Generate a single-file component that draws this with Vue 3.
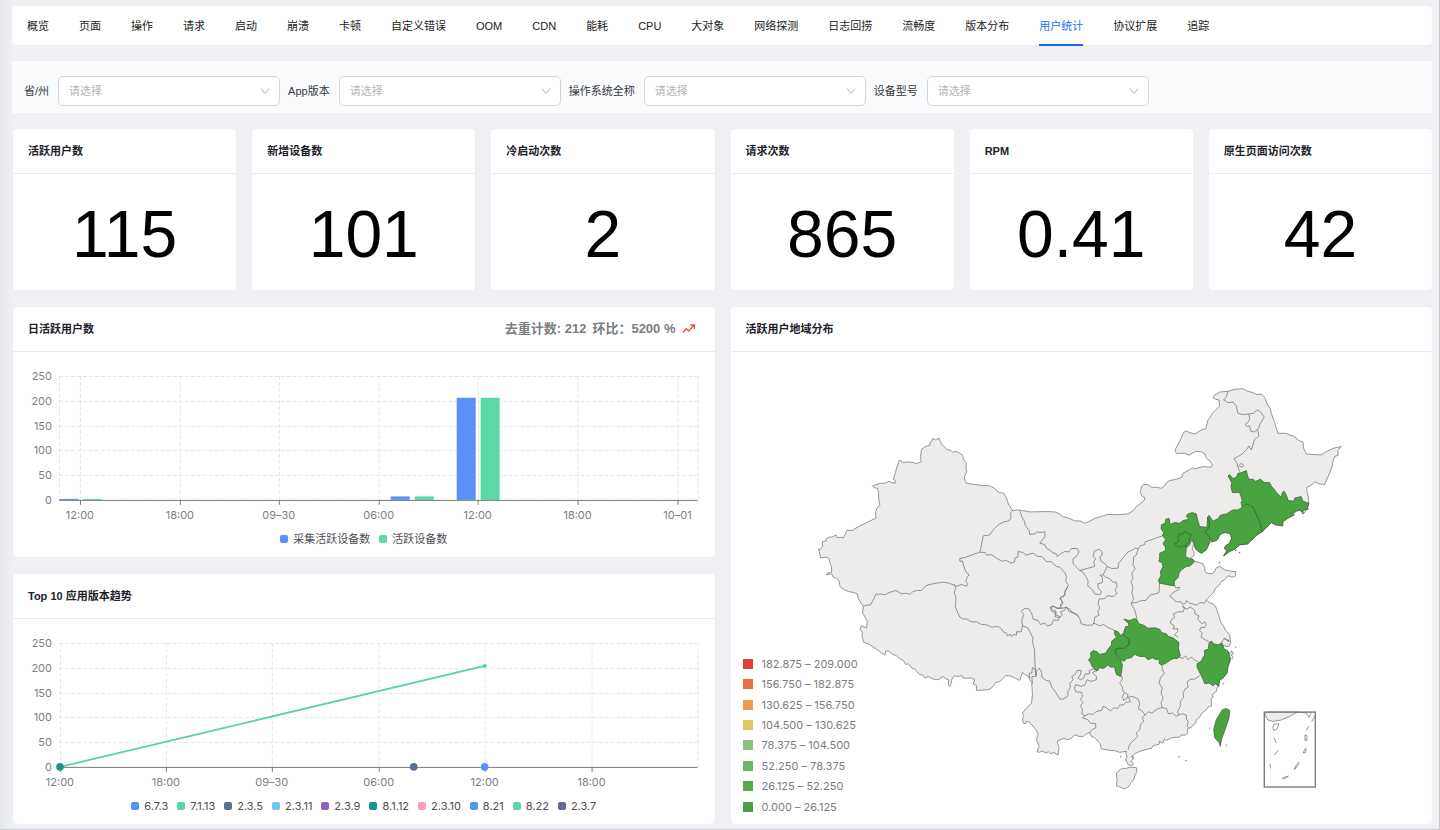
<script setup>
import { ref } from 'vue'

const tabs = ['概览', '页面', '操作', '请求', '启动', '崩溃', '卡顿', '自定义错误', 'OOM', 'CDN', '能耗', 'CPU', '大对象', '网络探测', '日志回捞', '流畅度', '版本分布', '用户统计', '协议扩展', '追踪']
const activeTab = ref('用户统计')

const filters = [
  { id: 'province', label: '省/州' },
  { id: 'app-version', label: 'App版本' },
  { id: 'os-name', label: '操作系统全称' },
  { id: 'device', label: '设备型号' },
]

const stats = [
  { title: '活跃用户数', value: '115' },
  { title: '新增设备数', value: '101' },
  { title: '冷启动次数', value: '2' },
  { title: '请求次数', value: '865' },
  { title: 'RPM', value: '0.41' },
  { title: '原生页面访问次数', value: '42' },
]

const plot = { left: 46, right: 685, top: 24, bottom: 148 }
const yTicks = [250, 200, 150, 100, 50, 0]
const yOf = (v) => plot.bottom - (v / 250) * (plot.bottom - plot.top)
const lineY = (v) => Math.round(yOf(v)) + 0.5

const barTicks = ['12:00', '18:00', '09–30', '06:00', '12:00', '18:00', '10–01'].map((label, i) => ({ label, x: Math.round(67 + i * 99.6) }))
const bars = [
  { x: 47, v: 2, color: '#5b8ff9' },
  { x: 70, v: 2, color: '#5ad8a6' },
  { x: 378, v: 7, color: '#5b8ff9' },
  { x: 402, v: 7, color: '#5ad8a6' },
  { x: 444, v: 206, color: '#5b8ff9' },
  { x: 468, v: 206, color: '#5ad8a6' },
]
const barLegend = [
  { name: '采集活跃设备数', color: '#5b8ff9' },
  { name: '活跃设备数', color: '#5ad8a6' },
]

const lineTicks = ['12:00', '18:00', '09–30', '06:00', '12:00', '18:00'].map((label, i) => ({ label, x: Math.round(46.5 + i * 106.4) }))
const versions = [
  { name: '6.7.3', color: '#5b8ff9' },
  { name: '7.1.13', color: '#5ad8a6' },
  { name: '2.3.5', color: '#5d7092' },
  { name: '2.3.11', color: '#6dc8ec' },
  { name: '2.3.9', color: '#9261bb' },
  { name: '8.1.12', color: '#1e9493' },
  { name: '2.3.10', color: '#ff99c3' },
  { name: '8.21', color: '#5b8ff9' },
  { name: '8.22', color: '#5ad8a6' },
  { name: '2.3.7', color: '#666a93' },
]

const ranges = [
  { text: '182.875 – 209.000', color: '#e7403b' },
  { text: '156.750 – 182.875', color: '#ee6d3f' },
  { text: '130.625 – 156.750', color: '#f1994f' },
  { text: '104.500 – 130.625', color: '#dfc95e' },
  { text: '78.375 – 104.500', color: '#8cc17c' },
  { text: '52.250 – 78.375', color: '#66b962' },
  { text: '26.125 – 52.250', color: '#55ab45' },
  { text: '0.000 – 26.125', color: '#4b9e47' },
]

/* The map is drawn in three sheets; each sheet has its own origin. */
const W = [0, 120]
const N = [660, 0]
const S = [660, 600]
const shift = ([dx, dy], s) => s.trim().split(/\s+/).map((p) => {
  const [x, y] = p.split(',').map(Number)
  return `${x + dx},${y + dy}`
}).join(' ')

const country = [
  shift(W, '55,388 62,388 68,380 67,366 78,363 80,356 88,352 98,351 108,345 112,354 122,352 130,354 136,344 140,332 158,331 168,325 180,318 204,306 228,295 227,275 233,262 240,257 236,235 236,218 232,205 222,203 218,198 240,190 255,190 268,184 275,188 286,190 285,180 280,178 286,160 290,145 298,121 306,124 310,129 320,126 340,128 350,131 364,126 362,110 365,88 376,80 390,76 390,68 396,64 399,55 406,60 418,55 424,72 430,77 440,88 452,91 458,97 466,94 475,97 488,106 492,120 500,130 498,142 501,155 494,170 494,180 500,190 540,196 570,198 585,206 598,218 612,220 620,234 625,250 638,272 658,270 690,276 740,275 765,276 780,282 790,291 805,294 825,303'),
  shift(N, '180,423 195,430 205,426 225,416 262,404 300,404 325,402 340,392 350,380 375,360 374,352 366,348 362,335 366,318 372,314 385,314 395,322 410,322 425,325 435,318 440,308 450,302 470,298 486,292 490,280 512,268 518,264 525,267 550,260 575,262 578,255 572,244 560,235 556,222 545,216 530,214 518,220 508,226 495,220 478,220 472,222 466,214 468,206 485,175 488,165 497,152 510,158 525,162 545,150 558,147 565,120 572,112 578,100 590,88 600,78 598,60 588,58 580,54 584,46 600,36 625,34 645,28 668,26 685,34 700,38 712,44 725,42 735,52 744,75 752,85 755,100 764,124 768,138 775,160 800,160 812,166 822,168 838,182 850,186 852,205 860,222 880,224 905,225 920,215 935,208 945,204 965,200 955,212 956,226 945,230 940,246 938,260 930,280 915,314 900,312 885,306 875,316 862,322 862,335 866,350 868,370 860,392 851,402 842,390 832,394 820,400 810,412 790,425 788,438 768,435 755,428 742,442 728,455 708,468 700,478 690,485 685,492 660,495 645,508 630,515 612,528 622,512 614,506 618,498 630,490 636,475 632,462 618,458 608,460 600,466 594,478 590,482 575,486 568,492 560,510 545,520 538,516 528,508 520,482 515,482 500,500 502,530 525,545 540,548 550,552 555,562 556,575 562,580 578,582 585,574 590,564 600,560 615,570 640,575 648,575 648,588 640,592 625,588 615,600 605,605 600,615 588,625 582,638 565,655'),
  shift(S, '560,60 568,68 580,72 588,80 592,92 597,105 602,124 612,140 620,155 630,165 632,180 632,192 628,200 618,200 608,196 612,208 625,215 630,222 632,240 625,260 622,280 610,295 600,300 597,318 592,325 590,335 578,345 580,352 574,358 576,378 565,382 560,390 545,402 540,412 530,420 528,430 515,442 503,448 505,458 498,466 485,466 480,472 455,474 440,482 434,478 430,490 420,484 418,494 400,498 395,506 385,508 370,512 360,515 345,522 336,530 340,538 334,545 342,552 338,557 325,555 318,540 322,530 318,522 320,515 300,518 285,513 270,512 245,508 240,490 225,474 215,470 210,458 200,462 190,470 178,470 165,465 155,475 145,480 132,476 115,482 112,490 118,500 115,526 106,522 104,518 92,522 86,516 80,520 66,514 60,518 52,516 58,500 50,480 55,462 48,450 40,440 30,428 20,424 18,432 10,430 8,418 12,410 8,400 20,385 28,378 35,370 38,345 36,310'),
  shift(W, '698,790 690,780 685,768 676,765 668,758 664,770 660,782 648,776 630,768 618,768 600,785 588,788 575,805 565,810 530,812 530,798 520,792 525,780 515,775 490,775 488,768 470,770 464,768 456,778 454,790 450,800 446,796 446,780 436,776 430,770 415,780 400,778 385,770 375,775 370,766 360,765 350,755 346,748 336,745 325,732 318,734 310,722 298,716 290,708 278,704 268,695 258,693 255,706 245,700 235,692 205,672 192,668 186,648 188,638 181,630 184,618 200,624 202,605 196,592 188,580 190,560 180,545 175,535 172,522 160,518 145,515 130,508 120,500 118,485 110,475 100,472 95,462 80,465 82,460 95,457 95,440 90,430 88,418 80,412 62,414 58,395'),
].join(' ')

const borders = [
  [W, '638,272 632,280 634,292 628,303 612,306 600,312 592,318 580,330 570,345 550,348 545,375 540,397 520,404 498,412 480,416 480,424 488,424 492,440 498,456 508,465 502,472 498,485 504,492 500,499 484,494 468,500 462,492'],
  [W, '190,560 200,556 212,555 220,540 228,523 245,523 255,525 268,518 282,514 288,512 298,518 305,522 320,520 330,524 338,516 350,512 365,512 375,500 385,495 410,490 430,487 448,490 462,496 468,502 463,520 468,530 468,545 466,560 472,574 480,592 490,598 500,597 514,606 530,606 545,614 560,615 575,622 595,620 606,628 610,636 620,640 622,648 632,644 635,651 642,644 650,646 650,636 664,636 668,618'],
  [W, '668,618 666,600 672,584 664,574 676,565 688,568 696,582 700,598 715,602 722,614 735,610 742,618 755,615 762,600 775,602 780,590 765,584 768,574 752,566 758,558 775,565 790,565 800,562 808,575 820,578 836,590'],
  [W, '668,618 684,624 690,635 700,656 698,665 704,690 706,740 710,768 704,746 698,744 696,760 688,760 690,776'],
  [W, '540,397 556,398 560,406 574,404 590,415 606,424 620,422 634,430 644,426 645,415 654,412 655,395 670,398 678,406 700,400 714,410 726,410 740,425 755,426 770,440 780,442 795,458 800,470 798,485 806,496 795,515 796,526 782,536 790,550 782,560'],
  [N, '0,392 8,415 14,424 16,436 28,452 30,464 45,462 52,456 64,458 75,455 76,470 68,480 60,490 75,494 80,505 92,512 100,520 108,520 112,530 122,522 135,515 148,516 155,506 172,506 178,516 170,530 160,536 160,552 170,562 180,572 205,565 225,560 222,545 228,536 220,530 224,514 238,508 247,516 247,526 240,532 245,545 256,552 262,560 276,566 295,565 297,550 310,534 325,516 340,510 346,504 355,508 362,498 375,494 376,486 395,480 410,474 428,468'],
  [N, '180,572 188,576 200,592 205,604 204,618 218,630 225,642 240,645 246,636 236,626 234,612 248,608 248,592 240,586 250,585 262,560'],
  [N, '250,585 258,592 270,596 278,606 290,608 292,620 286,632 292,640 282,650 262,648 255,656 238,658 235,672 240,684 234,695 238,706 225,712 222,732'],
  [N, '355,508 350,525 342,532 340,555 346,566 336,582 340,595 334,605 340,625 336,640 342,656 334,672 345,690 352,718'],
  [S, '335,70 350,68 365,62 378,62 392,45 408,42 418,38 420,5'],
  [S, '145,20 136,35 135,45 120,55 128,66 122,75 125,85 110,86 102,80 92,82 96,95 110,98 105,110 118,114 128,106 122,96 134,92 140,82 152,90 156,98 172,104 180,116 184,132 200,136 218,136 222,130'],
  [S, '222,130 240,138 252,134 262,142 272,146 285,152'],
  [S, '38,310 36,290 48,290 50,275 58,265 66,278 66,292 80,302 90,304 96,322 108,338 120,358 130,358 145,348 144,335 152,322 150,310 160,300 156,290 168,282 172,272 184,272 182,285 175,295 182,300 192,295 196,283 210,282 208,272 222,268 238,270'],
  [S, '232,272 218,278 230,290 230,300 214,305 202,300 196,315 184,320 168,314 164,325 168,336 186,338 188,350 182,360 190,368 182,378 188,390 186,402 196,408 188,414 204,420 212,430 228,432 228,445 216,450 210,458'],
  [S, '196,408 208,402 220,404 230,395 246,392 250,380 260,384 272,394 282,384 294,386 300,376 312,375 318,368 332,366 326,352 338,350 355,358 360,372 356,388 366,392 376,406 386,396 396,400 404,394 416,386 428,384 440,386 446,402 458,400 470,410 476,406 488,402 500,406 500,418 506,426 502,440 508,446'],
  [S, '304,285 308,298 300,310 308,322 310,335 325,345 322,356 312,362 308,350 314,340'],
  [S, '427,255 428,270 434,280 422,295 418,310 428,325 424,340 430,355 424,370 428,384'],
  [S, '476,406 474,395 482,380 482,366 492,352 490,340 496,328 506,322 502,306 514,298 525,298 540,288'],
  [S, '376,406 368,412 372,425 362,435 360,450 350,460 354,470 344,480 335,488 328,498 326,510'],
  [S, '478,232 490,236 498,228 505,240 514,232 524,240 536,246'],
  [S, '475,172 464,165 474,155 474,146 460,148 464,138 452,130 454,120 464,114 462,102 474,96 490,96 494,86 488,78'],
  [S, '465,15 468,24 480,22 476,30 460,38 450,50 460,56 468,66 484,66 490,74 498,70 500,62 510,70 532,76 540,68 555,70 560,60'],
  [S, '488,78 500,88 512,82 524,90 526,102 538,108 534,118 546,132 556,126 560,134 554,144 544,142 540,152 548,160 544,172 560,182 575,190'],
  [S, '608,196 606,186 615,176 628,184'],
  [N, '625,34 620,50 612,60 625,68 640,66 650,78 655,100 670,104 688,102 702,100 712,90 722,95 734,112 722,130 718,142 714,150 718,168 704,180 700,195 695,210 688,198 680,210 668,222 655,230 643,236 652,250 655,262 660,275'],
  [N, '688,102 690,118 684,128 676,134 684,140 690,138 694,154 704,156 712,150'],
  [N, '656,260 664,250 672,256 668,262 660,258'],
].map(([o, s]) => shift(o, s))

const activeRegions = [
  [N, '625,288 630,284 640,296 650,292 655,280 666,278 680,272 684,288 688,298 700,298 708,304 722,298 735,308 750,308 756,320 764,328 772,340 785,352 788,338 794,334 800,345 806,362 822,364 826,354 845,350 850,364 868,370 864,384 866,388 850,392 851,402 842,390 832,392 820,400 824,406 806,414 790,425 790,438 768,435 755,428 742,442 728,455 722,432 714,412 706,395 704,385 690,375 668,382 664,368 668,362 660,338 638,338 634,320 636,308'],
  [N, '668,382 678,372 690,378 700,382 706,395 714,412 722,432 728,455 708,468 700,478 690,485 685,492 660,495 645,508 630,515 612,528 622,512 614,506 618,498 630,490 636,475 632,462 618,458 608,460 600,466 594,478 590,482 575,486 572,476 556,455 566,446 570,432 564,412 568,406 580,424 596,416 602,406 620,402 640,390 655,390'],
  [N, '428,468 432,458 424,446 425,435 436,430 438,418 448,416 452,434 465,428 480,430 490,422 508,418 500,410 504,402 518,398 530,402 534,420 540,440 562,442 564,412 570,432 566,446 556,455 572,476 568,492 560,510 545,520 538,516 528,508 520,482 510,480 510,495 500,505 498,530 508,535 520,538 525,545 512,558 500,560 485,570 478,580 476,592 464,604 464,618 450,616 440,614 420,610 416,602 424,586 422,575 430,560 426,548 418,545 420,532 420,520 438,512 436,500 430,492 438,478'],
  [S, '312,118 330,122 345,116 352,120 358,132 372,136 385,145 405,144 420,148 425,158 440,162 446,170 460,174 468,180 478,188 476,205 482,228 474,236 462,236 450,242 440,250 425,256 418,250 420,238 410,240 398,234 385,240 375,230 360,230 345,224 335,234 322,236 312,245 304,240 290,225 286,210 300,204 312,206 328,194 328,180 315,168 312,156 318,140 328,140 326,130'],
  [S, '285,152 295,156 304,168 310,160 315,168 328,180 328,194 312,206 300,204 286,210 290,228 302,240 308,255 306,275 302,290 290,284 284,262 272,262 264,256 252,266 238,264 232,274 218,262 212,248 206,240 214,232 212,220 220,212 232,216 240,224 258,220 265,208 275,196 276,184 290,172 284,162'],
  [S, '568,190 576,184 582,192 596,195 605,190 610,196 612,206 625,214 628,222 632,240 625,260 622,280 610,295 600,300 597,320 588,312 580,318 568,310 555,312 550,298 542,282 532,262 532,252 545,244 548,236 555,226 554,212 566,208'],
  [S, '608,390 620,386 630,392 628,415 618,445 606,478 602,500 598,488 585,474 582,448 590,420'],
].map(([o, s]) => shift(o, s))
const beijing = shift(N, '465,492 478,484 474,476 478,464 490,462 494,454 504,460 515,466 508,478 510,488 500,492 500,500 488,498 476,502')
const tianjin = shift(N, '515,482 510,495 500,505 498,530 510,536 522,528 524,518 518,508 522,492')
const hainan = shift(S, '290,580 300,572 306,566 320,566 330,562 350,564 352,576 345,588 342,600 332,612 328,620 315,628 300,622 290,618 292,600')
const islets = [[570, 445], [620, 496], [478, 531], [499, 543], [610, 312], [636, 214], [648, 202], [303, 531], [624, -88], [648, -88], [660, -82], [600, -52]]
</script>

<template>
  <div class="page">
    <nav class="tabs">
      <a v-for="t in tabs" :key="t" href="#" :class="{ active: t === activeTab }" @click.prevent="activeTab = t">{{ t }}</a>
    </nav>

    <form class="filters" @submit.prevent>
      <div v-for="f in filters" :key="f.id" class="field">
        <label :for="f.id">{{ f.label }}</label>
        <div class="select">
          <select :id="f.id"><option>请选择</option></select>
          <svg viewBox="0 0 10 10" aria-hidden="true"><path d="M1 2.5 5 7.5 9 2.5" /></svg>
        </div>
      </div>
    </form>

    <section class="stats">
      <article v-for="s in stats" :key="s.title" class="card">
        <header><h2>{{ s.title }}</h2></header>
        <p class="value">{{ s.value }}</p>
      </article>
    </section>

    <section class="panels">
      <div class="column">
        <article class="card">
          <header>
            <h2>日活跃用户数</h2>
            <p class="summary">
              <span>去重计数: 212</span><span>环比：5200 %</span>
              <svg viewBox="0 0 14 12" aria-hidden="true"><path d="M1 9.5 4.3 5.8 6.6 8 11.8 2.4M8.3 2H12.5V6" /></svg>
            </p>
          </header>
          <svg class="chart" viewBox="0 0 702 174">
            <g class="grid">
              <line v-for="v in yTicks" :key="v" :x1="plot.left" :x2="plot.right" :y1="lineY(v)" :y2="lineY(v)" />
              <line v-for="t in barTicks" :key="t.x" :x1="t.x + 0.5" :x2="t.x + 0.5" :y1="plot.top" :y2="plot.bottom" />
              <line :x1="plot.left + 0.5" :x2="plot.left + 0.5" :y1="plot.top" :y2="plot.bottom" />
              <line :x1="plot.right + 0.5" :x2="plot.right + 0.5" :y1="plot.top" :y2="plot.bottom" />
            </g>
            <rect v-for="b in bars" :key="b.x" :x="b.x" :y="yOf(b.v)" width="19" :height="plot.bottom - yOf(b.v)" :fill="b.color" />
            <g class="axis">
              <line :x1="plot.left" :x2="plot.right" :y1="lineY(0)" :y2="lineY(0)" />
              <line v-for="t in barTicks" :key="t.x" :x1="t.x + 0.5" :x2="t.x + 0.5" :y1="plot.bottom" :y2="plot.bottom + 5" />
            </g>
            <text v-for="v in yTicks" :key="v" class="end" x="39" :y="lineY(v) + 4">{{ v }}</text>
            <text v-for="t in barTicks" :key="t.x" class="mid" :x="t.x" y="167">{{ t.label }}</text>
          </svg>
          <ul class="legend">
            <li v-for="l in barLegend" :key="l.name"><i :style="{ background: l.color }"></i>{{ l.name }}</li>
          </ul>
        </article>

        <article class="card">
          <header><h2>Top 10 应用版本趋势</h2></header>
          <svg class="chart" viewBox="0 0 702 174">
            <g class="grid">
              <line v-for="v in yTicks" :key="v" :x1="plot.left" :x2="plot.right" :y1="lineY(v)" :y2="lineY(v)" />
              <line v-for="t in lineTicks" :key="t.x" :x1="t.x + 0.5" :x2="t.x + 0.5" :y1="plot.top" :y2="plot.bottom" />
              <line :x1="plot.right + 0.5" :x2="plot.right + 0.5" :y1="plot.top" :y2="plot.bottom" />
            </g>
            <g class="axis">
              <line :x1="plot.left" :x2="plot.right" :y1="lineY(0)" :y2="lineY(0)" />
              <line v-for="t in lineTicks" :key="t.x" :x1="t.x + 0.5" :x2="t.x + 0.5" :y1="plot.bottom" :y2="plot.bottom + 5" />
            </g>
            <path d="M47 148 472 47" fill="none" stroke="#5ad1a3" stroke-width="1.8" />
            <circle cx="472" cy="47" r="2" fill="#5ad1a3" />
            <circle cx="47" cy="148" r="3.8" fill="#1e9487" />
            <circle cx="401" cy="148" r="3.8" fill="#5d6b93" />
            <circle cx="472" cy="148" r="3.8" fill="#5b8ff9" />
            <text v-for="v in yTicks" :key="v" class="end" x="39" :y="lineY(v) + 4">{{ v }}</text>
            <text v-for="t in lineTicks" :key="t.x" class="mid" :x="t.x" y="167">{{ t.label }}</text>
          </svg>
          <ul class="legend">
            <li v-for="l in versions" :key="l.name"><i :style="{ background: l.color }"></i>{{ l.name }}</li>
          </ul>
        </article>
      </div>

      <article class="card map">
        <header><h2>活跃用户地域分布</h2></header>
        <svg class="china" viewBox="-207 -84 2106 1416" role="img" aria-label="活跃用户地域分布">
          <polygon class="land" :points="country" />
          <polygon class="land" :points="hainan" />
          <polyline v-for="(b, i) in borders" :key="i" class="border" :points="b" />
          <polygon v-for="(r, i) in activeRegions" :key="i" class="land on" :points="r" />
          <polygon class="land" :points="tianjin" />
          <polygon class="land on" :points="beijing" />
          <g transform="translate(660 600)">
            <circle v-for="(p, i) in islets" :key="i" class="islet" :cx="p[0]" :cy="p[1]" r="2" />
            <path class="border" d="M630 220l8-4 3 6-7 4 6 4-4 6 5 2M612 176l8 4 8 6-4-8M336 528l6 4-2 6" />
            <path class="land" d="M734 402 744 397H834L812 409 784 421 758 425 744 420Z" />
            <path class="border" d="M834 397 860 400 868 413 876 397M886 410 876 426M763 433 778 432 772 448 762 452 760 444ZM868 438 860 452M856 466H862V482H856ZM763 474 770 490M776 512 764 526M860 506 858 518 851 520 856 508ZM750 552 754 566M839 548 828 566 824 569 830 556ZM806 590 796 596 788 597 798 591Z" />
            <rect class="frame" x="734" y="397" width="153" height="225" />
          </g>
        </svg>
        <ul class="ranges">
          <li v-for="r in ranges" :key="r.text"><i :style="{ background: r.color }"></i>{{ r.text }}</li>
        </ul>
      </article>
    </section>
  </div>
</template>

<style>
body {
  background: #eff0f3;
}
</style>

<style scoped>
.page {
  box-sizing: border-box;
  min-height: 100vh;
  padding: 6px 7px 5px 12px;
  border-right: 1px solid #c6c9cf;
  border-bottom: 1px solid #c6c9cf;
  background: linear-gradient(to right, #e5e6e9, #eff0f3 12px);
  font-family: "Liberation Sans", "Noto Sans CJK SC", sans-serif;
  font-size: 11px;
  line-height: 16px;
  color: #1d2129;
}
h2, p, ul {
  margin: 0;
  padding: 0;
}
ul {
  list-style: none;
}
.tabs {
  display: flex;
  gap: 30px;
  padding: 0 15px;
  height: 39px;
  border-radius: 4px;
  background: #fff;
}
.tabs a {
  position: relative;
  line-height: 40px;
  white-space: nowrap;
  color: #1b1b1b;
  text-decoration: none;
}
.tabs a.active {
  color: #1f74ee;
}
.tabs a.active::after {
  content: "";
  position: absolute;
  left: 0;
  right: 0;
  bottom: -1px;
  height: 2px;
  background: #1769f0;
}
.filters {
  display: flex;
  align-items: center;
  gap: 8px;
  height: 52px;
  margin-top: 16px;
  padding: 0 12px;
  box-sizing: border-box;
  background: #fafbfd;
}
.field {
  display: flex;
  align-items: center;
  gap: 9px;
  padding-top: 7px;
}
.field label {
  white-space: nowrap;
  color: #33383e;
}
.select {
  position: relative;
}
.select select {
  display: block;
  box-sizing: border-box;
  width: 222px;
  height: 30px;
  padding: 0 10px;
  border: 1px solid #d5d7da;
  border-radius: 5px;
  appearance: none;
  background: #fff;
  color: #b3b5b8;
  font: inherit;
}
.select svg {
  position: absolute;
  top: 10px;
  right: 10px;
  width: 10px;
  height: 10px;
  fill: none;
  stroke: #b0b3b7;
  pointer-events: none;
}
.stats {
  display: grid;
  grid-template-columns: repeat(6, 1fr);
  gap: 16px;
  margin: 16px 0 17px 1px;
}
.card {
  border-radius: 4px;
  background: #fff;
}
.card header {
  display: flex;
  align-items: center;
  justify-content: space-between;
  box-sizing: border-box;
  height: 45px;
  padding: 0 15px;
  border-bottom: 1px solid #ebecee;
}
.card h2 {
  font-size: 11px;
  font-weight: 700;
  line-height: 16px;
}
.value {
  height: 116px;
  line-height: 120px;
  text-align: center;
  font-size: 66px;
  color: #000;
}
.panels {
  display: grid;
  grid-template-columns: 1fr 1fr;
  gap: 16px;
  margin-left: 1px;
}
.column {
  display: grid;
  gap: 17px;
  min-width: 0;
}
.summary {
  display: flex;
  align-items: center;
  gap: 6px;
  padding-right: 4px;
  font-size: 13px;
  font-weight: 700;
  color: #7b7d80;
}
.summary svg {
  width: 14px;
  height: 12px;
  fill: none;
  stroke: #f0503c;
  stroke-width: 1.3;
}
.chart {
  display: block;
  width: 100%;
}
.chart text {
  font-family: Inter, sans-serif;
  font-size: 11px;
  fill: #7d7f82;
}
.chart .end {
  text-anchor: end;
}
.chart .mid {
  text-anchor: middle;
}
.grid line {
  stroke: #e3e7ea;
  stroke-dasharray: 4 2;
}
.axis line {
  stroke: #797b7f;
}
.legend {
  display: flex;
  justify-content: center;
  gap: 9px;
  height: 31px;
  line-height: 26px;
  font-family: Inter, "Noto Sans CJK SC", sans-serif;
  color: #4c4e52;
}
.legend li {
  display: flex;
  align-items: center;
  gap: 5px;
  height: 26px;
  white-space: nowrap;
}
.legend i {
  width: 8px;
  height: 8px;
  border-radius: 2px;
}
.map {
  position: relative;
  min-width: 0;
}
.china {
  display: block;
  width: 100%;
}
.land {
  fill: #edeceb;
  stroke: #666;
  stroke-width: 2;
  stroke-linejoin: round;
}
.land.on {
  fill: #4aa341;
  stroke: #35582f;
}
.border {
  fill: none;
  stroke: #666;
  stroke-width: 2;
  stroke-linejoin: round;
}
.islet {
  fill: #666;
}
.frame {
  fill: none;
  stroke: #777;
  stroke-width: 4;
}
.ranges {
  position: absolute;
  left: 12px;
  bottom: 7px;
  display: grid;
  grid-auto-rows: 1fr;
  height: 163px;
  font-family: Inter, sans-serif;
  color: #7b7d80;
}
.ranges li {
  display: flex;
  align-items: center;
  gap: 9px;
}
.ranges i {
  width: 10px;
  height: 10px;
}
</style>
